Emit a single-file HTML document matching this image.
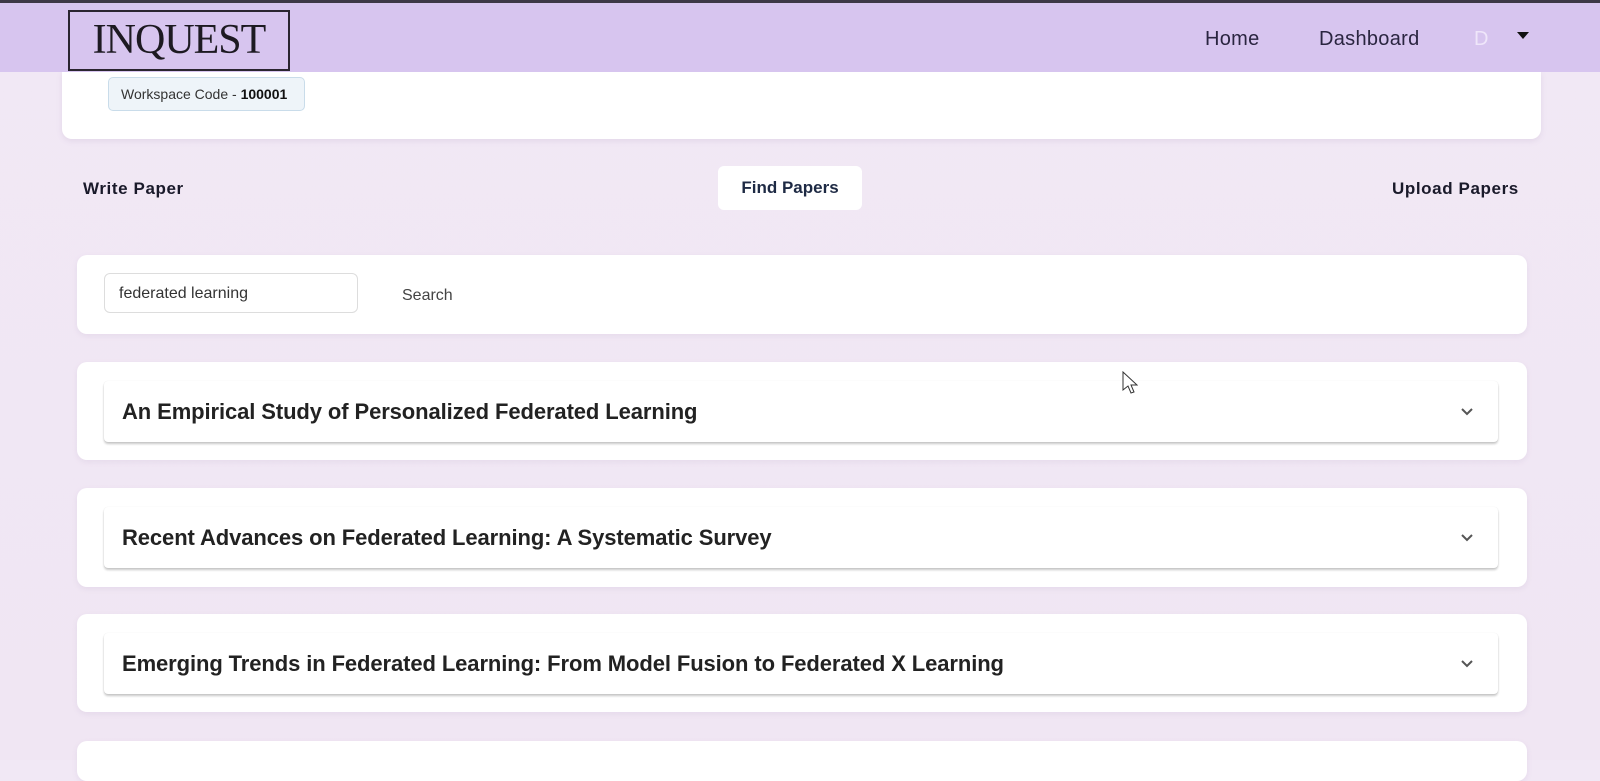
<!DOCTYPE html>
<html><head><style>
*{box-sizing:border-box;margin:0;padding:0}
body{width:1600px;height:760px;overflow:hidden;background:linear-gradient(180deg,#f1e8f5,#f0e6f3);font-family:"Liberation Sans",sans-serif;position:relative;color:#1e1e2a}
.hdr{position:absolute;left:0;top:0;width:1600px;height:72px;background:#d7c5ef;border-top:3px solid #3d3846}
.logo{position:absolute;left:68px;top:7px;width:222px;height:61px;border:2px solid #2a2530;font-family:"Liberation Serif",serif;font-size:42px;color:#1d1a22;text-align:center;line-height:56px;letter-spacing:-1px;font-weight:normal}
.nav{position:absolute;top:25px;font-size:20px;color:#2a2540;letter-spacing:0.3px}
.top{position:absolute;left:62px;top:72px;width:1479px;height:67px;background:#fff;border-radius:0 0 10px 10px;box-shadow:0 2px 6px rgba(150,120,170,.15)}
.chip{position:absolute;left:108px;top:77px;width:197px;height:34px;border:1px solid #c9dcea;background:#eef4f9;border-radius:5px;font-size:14px;line-height:32px;padding-left:12px;color:#333}
.tab{position:absolute;top:179px;font-size:17px;font-weight:bold;color:#1a1a2a;letter-spacing:0.6px}
.find{position:absolute;left:718px;top:166px;width:144px;height:44px;background:#fff;border-radius:6px;text-align:center;line-height:44px;font-size:17px;font-weight:bold;color:#1e2a44}
.card{position:absolute;left:77px;width:1450px;background:#fff;border-radius:10px;box-shadow:0 2px 6px rgba(150,120,170,.12)}
.input{position:absolute;left:104px;top:273px;width:254px;height:40px;border:1px solid #ddd;border-radius:6px;font-size:16px;line-height:40px;padding-left:14px;color:#333}
.item{position:absolute;left:104px;width:1394px;height:61px;background:#fff;border-radius:4px;box-shadow:0 2px 2px rgba(0,0,0,.22),0 0 1px rgba(0,0,0,.1);font-size:22px;font-weight:bold;line-height:61px;padding-left:18px;color:#222;letter-spacing:-0.1px}
.item svg{position:absolute;right:24px;top:26px}
</style></head><body>
<div class="top"></div>
<div class="hdr">
<div class="logo">INQUEST</div>
<div class="nav" style="left:1205px">Home</div>
<div class="nav" style="left:1319px">Dashboard</div>
<div class="nav" style="left:1474px;color:#efe6fa">D</div>
<svg style="position:absolute;left:1516px;top:28px" width="14" height="9"><path d="M1 1h12L7 8z" fill="#111"/></svg>
</div>
<div class="chip">Workspace Code - <b style="color:#111">100001</b></div>
<div class="tab" style="left:83px">Write Paper</div>
<div class="find">Find Papers</div>
<div class="tab" style="left:1392px">Upload Papers</div>
<div class="card" style="top:255px;height:79px"></div>
<div class="input">federated learning</div>
<div style="position:absolute;left:402px;top:287px;font-size:16px;color:#444">Search</div>
<div class="card" style="top:362px;height:98px"></div>
<div class="item" style="top:381px">An Empirical Study of Personalized Federated Learning<svg width="14" height="10"><path d="M2 2l5 5 5-5" stroke="#555" stroke-width="2" fill="none"/></svg></div>
<div class="card" style="top:488px;height:99px"></div>
<div class="item" style="top:507px">Recent Advances on Federated Learning: A Systematic Survey<svg width="14" height="10"><path d="M2 2l5 5 5-5" stroke="#555" stroke-width="2" fill="none"/></svg></div>
<div class="card" style="top:614px;height:98px"></div>
<div class="item" style="top:633px">Emerging Trends in Federated Learning: From Model Fusion to Federated X Learning<svg width="14" height="10"><path d="M2 2l5 5 5-5" stroke="#555" stroke-width="2" fill="none"/></svg></div>
<div class="card" style="top:741px;height:40px"></div>
<svg style="position:absolute;left:1122px;top:371px" width="16" height="24"><path d="M1 1v18l5-4 3 7 3-1-3-7h6z" fill="#fff" stroke="#333" stroke-width="1"/></svg>
</body></html>
